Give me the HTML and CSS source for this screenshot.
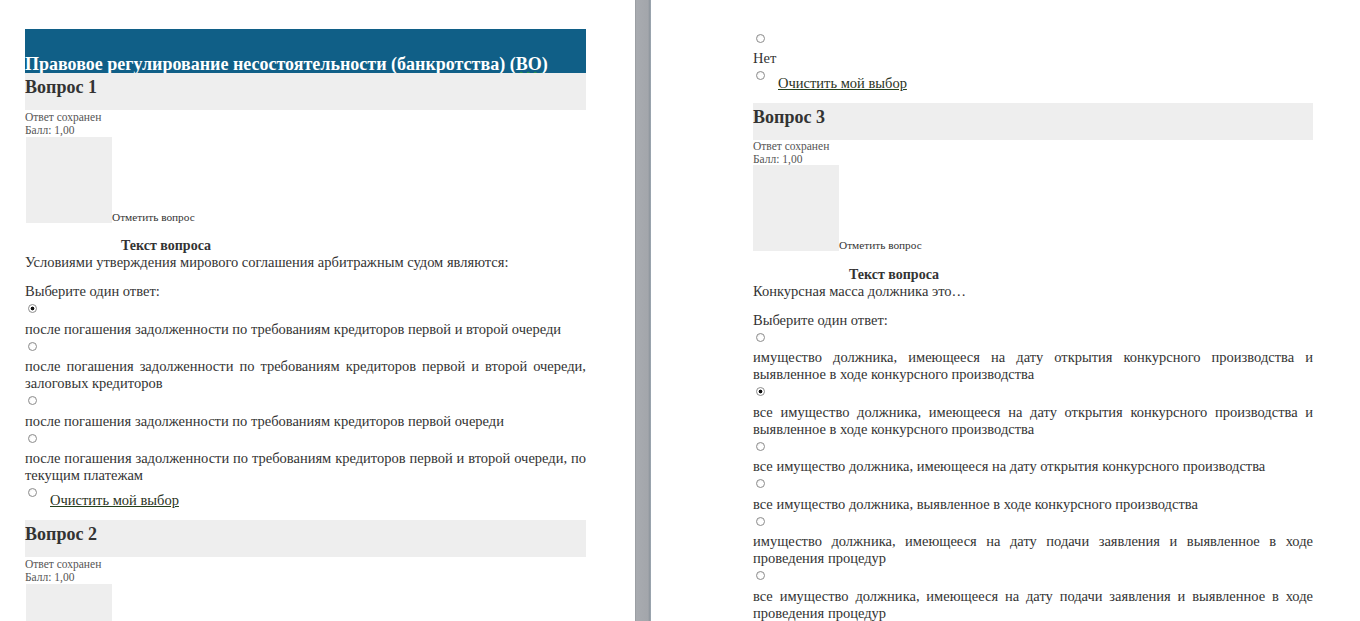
FILE: index.html
```html
<!DOCTYPE html>
<html>
	<head>
		<meta charset="UTF-8">
		<title>Тест</title>
		<link rel="stylesheet" href="styles.css">
	</head>
	<body>
		<div id="wrap">
			<div class="page left">
				<h1 class="course">Правовое регулирование несостоятельности (банкротства) (<span class="spell">ВО</span>)</h1>

				<h2 class="qno">Вопрос 1</h2>
				<div class="state">Ответ сохранен<br>Балл: 1,00</div>
				<div class="flag"><span class="flagbox"></span><span class="flagtext">Отметить вопрос</span></div>
				<div class="qtitle">Текст вопроса</div>
				<p class="qtext">Условиями утверждения мирового соглашения арбитражным судом являются:</p>
				<p class="prompt">Выберите один ответ:</p>
				<div class="opt"><span class="radio checked"></span></div>
				<p class="ans">после погашения задолженности по требованиям кредиторов первой и второй очереди</p>
				<div class="opt"><span class="radio"></span></div>
				<p class="ans">после погашения задолженности по требованиям кредиторов первой и второй очереди, залоговых кредиторов</p>
				<div class="opt"><span class="radio"></span></div>
				<p class="ans">после погашения задолженности по требованиям кредиторов первой очереди</p>
				<div class="opt"><span class="radio"></span></div>
				<p class="ans">после погашения задолженности по требованиям кредиторов первой и второй очереди, по текущим платежам</p>
				<div class="opt clear"><span class="radio"></span><a href="javascript:;">Очистить мой выбор</a></div>

				<h2 class="qno">Вопрос 2</h2>
				<div class="state">Ответ сохранен<br>Балл: 1,00</div>
				<div class="flag"><span class="flagbox"></span></div>
			</div>

			<div class="divider"></div>

			<div class="page right">
				<div class="opt"><span class="radio"></span></div>
				<p class="ans">Нет</p>
				<div class="opt clear"><span class="radio"></span><a href="javascript:;">Очистить мой выбор</a></div>

				<h2 class="qno">Вопрос 3</h2>
				<div class="state">Ответ сохранен<br>Балл: 1,00</div>
				<div class="flag"><span class="flagbox"></span><span class="flagtext">Отметить вопрос</span></div>
				<div class="qtitle">Текст вопроса</div>
				<p class="qtext">Конкурсная масса должника это…</p>
				<p class="prompt">Выберите один ответ:</p>
				<div class="opt"><span class="radio"></span></div>
				<p class="ans">имущество должника, имеющееся на дату открытия конкурсного производства и выявленное в ходе конкурсного производства</p>
				<div class="opt"><span class="radio checked"></span></div>
				<p class="ans">все имущество должника, имеющееся на дату открытия конкурсного производства и выявленное в ходе конкурсного производства</p>
				<div class="opt"><span class="radio"></span></div>
				<p class="ans">все имущество должника, имеющееся на дату открытия конкурсного производства</p>
				<div class="opt"><span class="radio"></span></div>
				<p class="ans">все имущество должника, выявленное в ходе конкурсного производства</p>
				<div class="opt"><span class="radio"></span></div>
				<p class="ans">имущество должника, имеющееся на дату подачи заявления и выявленное в ходе проведения процедур</p>
				<div class="opt"><span class="radio"></span></div>
				<p class="ans">все имущество должника, имеющееся на дату подачи заявления и выявленное в ходе проведения процедур</p>
			</div>
		</div>
	</body>
</html>
```

FILE: styles.css
```css
html,
body {
	margin: 0;
	padding: 0;
	height: 100%;
	overflow: hidden;
	background: #fff;
}

body,
div,
p,
h1,
h2 {
	font-family: "Liberation Serif", "Times New Roman", serif;
	color: #333;
}

p,
h1,
h2 {
	margin: 0;
}

#wrap {
	display: flex;
	height: 621px;
}

.page {
	width: 560px;
	padding-top: 29px;
	font-size: 14.5px;
	line-height: 17px;
}

.left {
	margin-left: 25px;
	width: 561px;
}

.right {
	margin-left: 102px;
	padding-top: 29.5px;
}

.divider {
	width: 16px;
	margin-left: 49px;
	background: linear-gradient(to right, #8e9297 0, #a8abb0 1px, #a3a6ab 13px, #8b939b 15px, #a8b4c0 16px);
}

/* header */
.course {
	height: 44px;
	box-sizing: border-box;
	padding-top: 25px;
	background: #105f87;
	color: #fff;
	font-size: 18px;
	line-height: 20px;
	font-weight: bold;
	overflow: hidden;
	white-space: nowrap;
}

.spell {
	text-decoration: underline wavy #2e9c3a;
	text-decoration-thickness: 1px;
	text-underline-offset: 1px;
}

/* question */
.qno {
	height: 37px;
	box-sizing: border-box;
	padding-top: 4px;
	background: #eee;
	font-size: 18px;
	line-height: 20px;
	font-weight: bold;
}

.state {
	padding-top: 1px;
	font-size: 11.5px;
	line-height: 12.5px;
	color: #555;
}

.right .state {
	padding-top: 0;
	line-height: 12.5px;
}

.flag {
	display: flex;
	align-items: flex-end;
	margin-top: 1px;
}

.right .flag {
	margin-top: 0;
}

.flagbox {
	width: 86px;
	height: 86px;
	background: #eee;
}

.left .flagbox {
	margin-left: 1px;
}

.flagtext {
	font-size: 11.3px;
	line-height: 11px;
}

.qtitle {
	margin: 15px 0 0 96px;
	font-size: 14px;
	line-height: 16px;
	font-weight: bold;
}

.right .qtitle {
	margin-top: 15.5px;
}

.qtext {
	margin-bottom: 12px;
}

/* answers */
.opt {
	height: 20.5px;
}

.radio {
	display: inline-block;
	box-sizing: border-box;
	width: 9px;
	height: 9px;
	margin: 4px 0 0 3px;
	border: 1px solid #8d8d8d;
	border-radius: 50%;
	background: radial-gradient(circle at 60% 60%, #fff 40%, #e2e2e2 100%);
	vertical-align: top;
}

.radio.checked {
	background: radial-gradient(circle, #111 0, #111 1.6px, #fff 2.2px);
}

.ans {
	text-align: justify;
}

.opt.clear {
	display: flex;
	height: auto;
	margin-bottom: 11px;
}

.opt.clear a {
	margin: 8px 0 0 13px;
	color: #2b3324;
	text-decoration: underline;
	text-decoration-color: #24401c;
}
```
